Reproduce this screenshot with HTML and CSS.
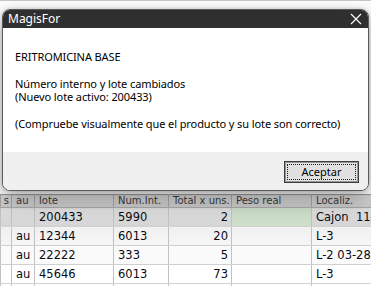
FILE: index.html
```html
<!DOCTYPE html>
<html>
<head>
<meta charset="utf-8">
<link rel="stylesheet" href="styles.css">
</head>
<body>
<div class="app">
  <div class="app-top"></div>
  <table class="grid">
    <colgroup>
      <col class="c-s"><col class="c-au"><col class="c-lote"><col class="c-num"><col class="c-tot"><col class="c-peso"><col class="c-loc">
    </colgroup>
    <thead>
      <tr><th>s</th><th>au</th><th>lote</th><th>Num.Int.</th><th>Total x uns.</th><th>Peso real</th><th>Localiz.</th></tr>
    </thead>
    <tbody>
      <tr class="sel"><td></td><td></td><td>200433</td><td>5990</td><td class="r">2</td><td class="peso"></td><td>Cajon&nbsp; 11-1</td></tr>
      <tr class="sh"><td></td><td>au</td><td>12344</td><td>6013</td><td class="r">20</td><td></td><td>L-3</td></tr>
      <tr class="sh2"><td></td><td>au</td><td>22222</td><td>333</td><td class="r">5</td><td></td><td>L-2 03-28</td></tr>
      <tr><td></td><td>au</td><td>45646</td><td>6013</td><td class="r">73</td><td></td><td>L-3</td></tr>
      <tr><td></td><td></td><td></td><td></td><td></td><td></td><td></td></tr>
    </tbody>
  </table>
</div>
<div class="dialog">
  <div class="titlebar">
    <span class="title">MagisFor</span>
    <svg class="close" width="12" height="12" viewBox="0 0 12 12"><path d="M1 1L11 11M11 1L1 11" stroke="#fff" stroke-width="1.1" fill="none"/></svg>
  </div>
  <div class="content">
    <p>ERITROMICINA BASE</p>
    <p>Número interno y lote cambiados<br>(Nuevo lote activo: 200433)</p>
    <p>(Compruebe visualmente que el producto y su lote son correcto)</p>
  </div>
  <div class="footer">
    <button class="btn"><span class="focus">Aceptar</span></button>
  </div>
</div>
</body>
</html>
```
FILE: styles.css
```css
html, body {
  margin: 0;
  padding: 0;
  background: #ffffff;
}
.app {
  width: 371px;
  height: 286px;
  overflow: hidden;
  position: relative;
}
.app-top {
  height: 193px;
  border-top: 1px solid #c8c8c8;
  background: #ffffff;
}
.grid {
  border-collapse: collapse;
  table-layout: fixed;
  width: 400px;
  font-family: "DejaVu Sans", Verdana, sans-serif;
}
.c-s { width: 11px; }
.c-au { width: 23px; }
.c-lote { width: 79px; }
.c-num { width: 55px; }
.c-tot { width: 63px; }
.c-peso { width: 80px; }
.c-loc { width: 89px; }
.grid th {
  height: 12px;
  padding: 0 0 0 4px;
  text-align: left;
  font-weight: normal;
  font-size: 10px;
  line-height: 12px;
  color: #3a3a3a;
  background: linear-gradient(#d9d9d9, #c9c9c9);
  border: 1px solid #a8a8a8;
  border-top: 1px solid #9a9a9a;
  white-space: nowrap;
  overflow: hidden;
}
.grid th:first-child { padding-left: 0; text-align: right; padding-right: 2px; }
.grid td {
  height: 18px;
  padding: 0 0 0 4px;
  font-size: 11.5px;
  line-height: 18px;
  color: #0a0a14;
  border-left: 1px solid #c2c2c2;
  border-right: 1px solid #c2c2c2;
  border-bottom: 1px solid #d0d0d0;
  white-space: nowrap;
  overflow: hidden;
}
.grid td.r {
  text-align: right;
  padding: 0 3px 0 0;
}
.grid tr.sel td {
  background: linear-gradient(#e0e0e0, #d4d4d4);
}
.grid tr.sel td.peso {
  background: #cddfc9;
}
.grid tr.sh td {
  background: linear-gradient(#f0f0f0, #f6f6f6);
}
.grid tr.sh2 td {
  background: #fafafa;
}
.dialog {
  position: absolute;
  left: 2px;
  top: 9px;
  width: 365px;
  height: 180px;
  border: 1px solid #5a5a5a;
  border-radius: 8px;
  overflow: hidden;
  background: #ffffff;
  box-shadow: 0 8px 22px rgba(0, 0, 0, 0.32), 0 0 4px rgba(0, 0, 0, 0.2);
  display: flex;
  flex-direction: column;
  font-family: "Noto Sans", "Open Sans", sans-serif;
}
.titlebar {
  height: 18px;
  background: #2f2f2f;
  display: flex;
  align-items: center;
  justify-content: space-between;
  padding: 0 5px 0 5px;
}
.title {
  color: #ffffff;
  font-size: 12px;
  line-height: 18px;
}
.close {
  display: block;
  margin-right: 1px;
}
.content {
  flex: 1;
  padding: 22px 12px 0 12px;
  font-size: 11px;
  line-height: 13.4px;
  letter-spacing: -0.1px;
  color: #000000;
}
.content p {
  margin: 0 0 13.4px 0;
}
.footer {
  height: 38px;
  background: #f0f0f0;
  display: flex;
  justify-content: flex-end;
  align-items: flex-start;
  padding: 9px 9px 0 0;
  box-sizing: border-box;
}
.btn {
  width: 75px;
  height: 22px;
  padding: 2px;
  border: 1px solid #3c3c3c;
  background: #e1e1e1;
  box-shadow: inset 0 0 0 1px #9a9a9a;
  font-family: "Noto Sans", "Open Sans", sans-serif;
  font-size: 11px;
  color: #000;
  display: flex;
}
.focus {
  flex: 1;
  border: 1px dotted #222;
  display: flex;
  align-items: center;
  justify-content: center;
  line-height: 14px;
}
```
